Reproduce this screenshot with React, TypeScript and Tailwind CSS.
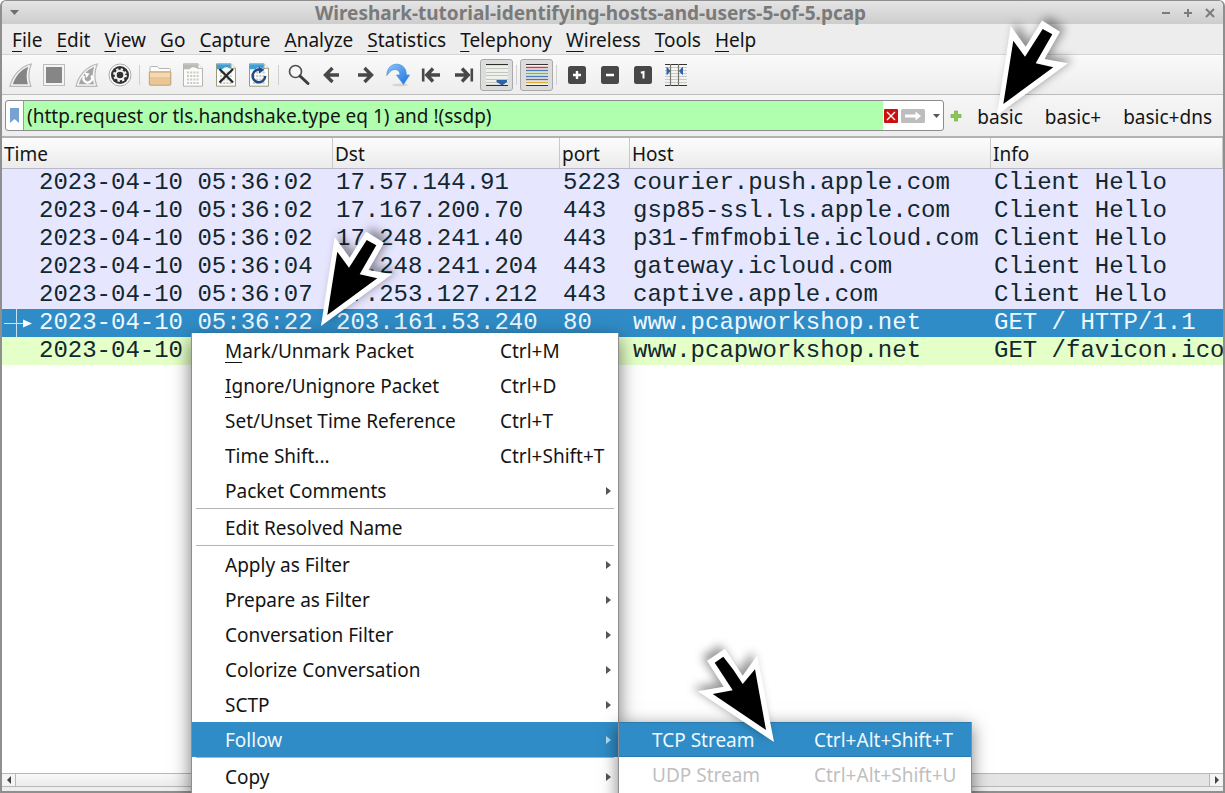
import type { ReactNode } from "react";

const MENUS = ["File", "Edit", "View", "Go", "Capture", "Analyze", "Statistics", "Telephony", "Wireless", "Tools", "Help"];

type Packet = { time: string; dst?: string; port?: string; host: string; info: string; kind: "tls" | "selected" | "http" };

const PACKETS: Packet[] = [
  { time: "2023-04-10 05:36:02", dst: "17.57.144.91", port: "5223", host: "courier.push.apple.com", info: "Client Hello", kind: "tls" },
  { time: "2023-04-10 05:36:02", dst: "17.167.200.70", port: "443", host: "gsp85-ssl.ls.apple.com", info: "Client Hello", kind: "tls" },
  { time: "2023-04-10 05:36:02", dst: "17.248.241.40", port: "443", host: "p31-fmfmobile.icloud.com", info: "Client Hello", kind: "tls" },
  { time: "2023-04-10 05:36:04", dst: "17.248.241.204", port: "443", host: "gateway.icloud.com", info: "Client Hello", kind: "tls" },
  { time: "2023-04-10 05:36:07", dst: "17.253.127.212", port: "443", host: "captive.apple.com", info: "Client Hello", kind: "tls" },
  { time: "2023-04-10 05:36:22", dst: "203.161.53.240", port: "80", host: "www.pcapworkshop.net", info: "GET / HTTP/1.1", kind: "selected" },
  { time: "2023-04-10", host: "www.pcapworkshop.net", info: "GET /favicon.ico", kind: "http" },
];

const ROW_STYLE = {
  tls: "bg-[#e7e6ff] text-[#12272e]",
  selected: "bg-[#308cc6] text-[#eef8ff]",
  http: "bg-[#e4ffc7] text-[#12272e]",
};

function Icon({ children }: { children: ReactNode }) {
  return (
    <svg viewBox="0 0 24 24" className="size-6" fill="none" aria-hidden="true">
      {children}
    </svg>
  );
}

function Tool({ label, pressed, children }: { label: string; pressed?: boolean; children: ReactNode }) {
  return (
    <button
      type="button"
      aria-label={label}
      aria-pressed={pressed}
      className={
        pressed
          ? "flex h-8 w-[33px] items-center rounded-[3px] border border-[#a9a9a9] bg-[#dcdcdc] pl-1"
          : "flex h-8 w-[33px] items-center pl-[5px]"
      }
    >
      {children}
    </button>
  );
}

function Divider() {
  return (
    <span className="flex h-5 w-[7px] justify-center">
      <span className="w-px bg-[#d0d0d0]" />
    </span>
  );
}

const FIN = "M1 23.3C3 14 10 4 22.3 1C19.3 8 19.3 16 21.8 23.3Z";
const FIN_INNER = "M3.8 21.3C6 14 11.500 7 19.200 3.700C17.200 9.500 17.200 15.500 18.900 21.300Z";

function Sheet({ color, corner }: { color: string; corner: string }) {
  return (
    <>
      <path d="M2.500 .8H17L21.500 5.300V23.200H2.500Z" fill="#fbfbf8" stroke={color} />
      <path d="M3 1.300H16.800V6C13 3.500 10 4 8.500 6.300H3Z" fill={corner} />
      <path d="M17 .8V5.300H21.500" fill="#fff" stroke={color} />
      <path d="M6 9.500h12.500M6 13h12.500M6 16.500h12.500M6 20h12.500" stroke="#c9c9c6" strokeWidth="2" strokeDasharray="2 1.200" />
    </>
  );
}

const LEFT_ARROW = "M12.500 5L5.500 12L12.500 19M6.500 12H19";
const RIGHT_ARROW = "M11.500 5L18.500 12L11.500 19M17.500 12H5";

function Toolbar() {
  return (
    <div role="toolbar" className="flex h-10 shrink-0 items-center border-b border-[#bcbcbc] bg-linear-to-b from-[#fafafa] to-[#ededed] pt-px pl-0.5">
      <Tool label="Start capture">
        <Icon>
          <path d={FIN} fill="#f4f4f4" stroke="#b9b9b9" strokeWidth="1.200" />
          <path d={FIN_INNER} fill="#858585" />
        </Icon>
      </Tool>
      <Tool label="Stop capture">
        <Icon>
          <rect x="1.500" y="1.500" width="21" height="21" fill="#f4f4f4" stroke="#bcbcbc" />
          <rect x="4" y="4" width="16" height="16" fill="#868686" />
        </Icon>
      </Tool>
      <Tool label="Restart capture">
        <Icon>
          <path d={FIN} fill="#f4f4f4" stroke="#b9b9b9" strokeWidth="1.200" />
          <path d={FIN_INNER} fill="#a5a5a5" />
          <path d="M9.200 12.800A4.300 4.300 0 1 0 16.200 12.500" stroke="#fff" strokeWidth="2.400" />
          <path d="M9.500 9.500L14.500 10.500L11.500 15Z" fill="#fff" />
        </Icon>
      </Tool>
      <Tool label="Capture options">
        <Icon>
          <circle cx="12" cy="12" r="11" fill="#fafafa" stroke="#ababab" />
          <circle cx="12" cy="12" r="9" fill="#303030" />
          <circle cx="12" cy="12" r="4.300" stroke="#f4f4f4" strokeWidth="2" />
          <circle cx="12" cy="12" r="5.900" stroke="#f4f4f4" strokeWidth="2" strokeDasharray="2.317 2.317" />
        </Icon>
      </Tool>
      <Divider />
      <Tool label="Open file">
        <Icon>
          <path d="M2 21V4.500Q2 3.500 3 3.500H9.500L11 5.500H21.500Q22.300 5.500 22.300 6.300V21Z" fill="#fff" stroke="#b5b5b5" />
          <path d="M1.300 9.500Q1.300 8.800 2 8.800H22Q22.800 8.800 22.800 9.500V21.500Q22.800 22.200 22 22.200H2Q1.300 22.200 1.300 21.500Z" fill="#e9c693" stroke="#c0a376" />
          <path d="M2 10H22V14H2Z" fill="#f3dab2" />
        </Icon>
      </Tool>
      <Tool label="Save file">
        <Icon>
          <Sheet color="#b4b4b4" corner="#b9b9b9" />
        </Icon>
      </Tool>
      <Tool label="Close file">
        <Icon>
          <Sheet color="#9a9a80" corner="#3ca0d8" />
          <path d="M5.500 6L19 19.500M19 6L5.500 19.500" stroke="#24292b" strokeWidth="2.300" />
        </Icon>
      </Tool>
      <Tool label="Reload file">
        <Icon>
          <Sheet color="#9a9a80" corner="#3ca0d8" />
          <path d="M14 7A6.300 6.300 0 1 0 18.200 13" stroke="#20498c" strokeWidth="2.500" />
          <path d="M11.500 3.500L17.500 6.800L12 10.500Z" fill="#20498c" />
        </Icon>
      </Tool>
      <Divider />
      <Tool label="Find packet">
        <Icon>
          <circle cx="8.500" cy="8.500" r="6" fill="#f8f8f8" stroke="#505050" strokeWidth="1.700" />
          <path d="M13 13L21 20.500" stroke="#3c3c3c" strokeWidth="3" strokeLinecap="round" />
        </Icon>
      </Tool>
      <Tool label="Previous packet">
        <Icon>
          <path d={LEFT_ARROW} stroke="#484848" strokeWidth="3.400" />
        </Icon>
      </Tool>
      <Tool label="Next packet">
        <Icon>
          <path d={RIGHT_ARROW} stroke="#484848" strokeWidth="3.400" />
        </Icon>
      </Tool>
      <Tool label="Go to packet">
        <Icon>
          <defs>
            <linearGradient id="goto" x1="0" y1="0" x2="1" y2="1">
              <stop offset="0" stopColor="#8fc6f8" />
              <stop offset="1" stopColor="#1670e0" />
            </linearGradient>
          </defs>
          <ellipse cx="14" cy="22" rx="8" ry="1.500" fill="#d4d4d4" />
          <path d="M.8 12.500C1 5 5.500 1 11 1.200C17 1.500 20.500 6 20.300 12H23.500L17.500 21.500L10.500 12H14C14 8.500 12 6.500 9 6.500C5.500 6.500 3.500 9 .8 12.500Z" fill="url(#goto)" stroke="#3d8be0" strokeWidth=".7" />
        </Icon>
      </Tool>
      <Tool label="First packet">
        <Icon>
          <path d="M4.200 5.500V18.500" stroke="#484848" strokeWidth="2.600" />
          <path d="M14 5.500L7.800 12L14 18.500M9 12H21" stroke="#484848" strokeWidth="3.400" />
        </Icon>
      </Tool>
      <Tool label="Last packet">
        <Icon>
          <path d="M19.800 5.500V18.500" stroke="#484848" strokeWidth="2.600" />
          <path d="M10 5.500L16.200 12L10 18.500M15 12H3" stroke="#484848" strokeWidth="3.400" />
        </Icon>
      </Tool>
      <Tool label="Auto scroll" pressed>
        <Icon>
          <path d="M1 1.500H23M1 22.500H23" stroke="#2f2f2f" strokeWidth="1.200" />
          <path d="M1 3H23V21H1Z" fill="#eef0ea" />
          <path d="M1 5.500H23M1 9.500H23M1 12.500H23M1 16.500H23M1 19.500H23" stroke="#c2c5bb" strokeWidth="1.200" />
          <path d="M11.500 17H22V19L20 20.500L17 22.500L14 20.500L11.500 19Z" fill="#2f63a8" />
        </Icon>
      </Tool>
      <Divider />
      <Tool label="Colorize packets" pressed>
        <Icon>
          <path d="M1 1H23V23H1Z" fill="#f3f3f0" />
          <path d="M1 1.500H23M1 22.500H23" stroke="#333" strokeWidth="1.200" />
          <path d="M1 4.500H23" stroke="#dc3b3b" strokeWidth="1.400" />
          <path d="M1 7.500H23" stroke="#4a78b8" strokeWidth="1.400" />
          <path d="M1 10.500H23" stroke="#72c040" strokeWidth="1.400" />
          <path d="M1 13.500H23" stroke="#4a78b8" strokeWidth="1.400" />
          <path d="M1 16.500H23" stroke="#80609a" strokeWidth="1.400" />
          <path d="M1 19.500H23" stroke="#d6b12e" strokeWidth="1.400" />
        </Icon>
      </Tool>
      <Divider />
      <Tool label="Zoom in">
        <Icon>
          <rect x="3" y="3" width="18" height="18" rx="2.500" fill="#484848" />
          <path d="M12 8V16M8 12H16" stroke="#fff" strokeWidth="2.400" />
        </Icon>
      </Tool>
      <Tool label="Zoom out">
        <Icon>
          <rect x="3" y="3" width="18" height="18" rx="2.500" fill="#484848" />
          <path d="M8 12H16" stroke="#fff" strokeWidth="2.400" />
        </Icon>
      </Tool>
      <Tool label="Normal size">
        <Icon>
          <rect x="3" y="3" width="18" height="18" rx="2.500" fill="#484848" />
          <path d="M9.800 9.800L12.500 9V15.500" stroke="#fff" strokeWidth="2" />
        </Icon>
      </Tool>
      <Tool label="Resize columns">
        <Icon>
          <path d="M1 4.500H23M1 7.500H23M1 10.500H23M1 13.500H23M1 16.500H23M1 19.500H23" stroke="#c8cbc4" strokeWidth="1.200" />
          <path d="M1 1.500H23M1 22.500H23" stroke="#333" strokeWidth="1.200" />
          <path d="M6.500 1V23M14.500 1V23" stroke="#77776c" strokeWidth="1.200" />
          <path d="M3 4.500L6 8L3 11.500ZM18.500 4.500L15.500 8L18.500 11.500Z" fill="#2f63a8" stroke="#2f63a8" />
        </Icon>
      </Tool>
    </div>
  );
}

function FilterBar() {
  return (
    <div className="flex h-[43px] shrink-0 items-center border-b-2 border-[#b2b2b2] bg-linear-to-b from-[#f6f6f6] to-[#ededed] pl-[3px]">
      <div className="flex h-[31px] min-w-0 flex-1 items-center rounded-[3px] border border-[#8c8c8c] bg-white">
        <button type="button" aria-label="Filter bookmarks" className="flex h-full w-[18px] items-center justify-center border-r border-[#9c9c9c]">
          <svg viewBox="0 0 9 15" className="h-[15px] w-[9px]" aria-hidden="true">
            <path d="M0 0H9V15L4.500 11L0 15Z" fill="#78a0d0" />
          </svg>
        </button>
        <input
          aria-label="Display filter"
          defaultValue="(http.request or tls.handshake.type eq 1) and !(ssdp)"
          className="h-full min-w-0 flex-1 bg-[#afffaf] pl-[3px] outline-none"
        />
        <button type="button" aria-label="Clear filter" className="ml-px">
          <svg viewBox="0 0 14 14" className="size-3.5" aria-hidden="true">
            <rect width="14" height="14" rx="1" fill="#cc1010" />
            <path d="M3 3L11 11M11 3L3 11" stroke="#fff" strokeWidth="1.300" />
          </svg>
        </button>
        <button type="button" aria-label="Apply filter" className="ml-[3px]">
          <svg viewBox="0 0 24 14" className="h-3.5 w-6" aria-hidden="true">
            <rect width="24" height="14" rx="1.500" fill="#bdbdbd" />
            <path d="M4 5.500H14.500V2.500L20 7L14.500 11.500V8.500H4Z" fill="#fff" />
          </svg>
        </button>
        <button type="button" aria-label="Recent filters" className="flex w-[18px] items-center justify-center pl-1">
          <svg viewBox="0 0 7 4" className="h-1 w-[7px]" aria-hidden="true">
            <path d="M0 0H7L3.500 4Z" fill="#555" />
          </svg>
        </button>
      </div>
      <button type="button" aria-label="Add filter button" className="flex w-[22px] items-center justify-center pl-px">
        <svg viewBox="0 0 12 12" className="size-3" aria-hidden="true">
          <path d="M4.500 1H7.500V4.500H11V7.500H7.500V11H4.500V7.500H1V4.500H4.500Z" fill="#8cc850" stroke="#72ae3c" strokeWidth=".7" />
        </svg>
      </button>
      <div className="flex pt-0.5">
        <button type="button" className="px-[11px]">basic</button>
        <button type="button" className="px-[11px]">basic+</button>
        <button type="button" className="px-[11px]">basic+dns</button>
      </div>
    </div>
  );
}

function PacketTable() {
  const head = "h-[31px] overflow-hidden border-r border-b border-r-[#c8c8c8] border-b-[#b8b8c8] px-0.5 pt-0.5 text-left font-normal";
  const cell = "h-7 overflow-hidden px-[3px] leading-7";
  return (
    <table className="w-full table-fixed border-separate border-spacing-0 whitespace-nowrap">
      <colgroup>
        <col className="w-[331px]" />
        <col className="w-[227px]" />
        <col className="w-[70px]" />
        <col className="w-[361px]" />
        <col />
      </colgroup>
      <thead className="bg-linear-to-b from-[#fcfcfc] to-[#ebebeb]">
        <tr>
          <th className={head}>Time</th>
          <th className={head}>Dst</th>
          <th className={head}>port</th>
          <th className={head}>Host</th>
          <th className={head}>Info</th>
        </tr>
      </thead>
      <tbody className="font-['Liberation_Mono',monospace] text-2xl">
        {PACKETS.map((p) => (
          <tr key={p.time + p.dst + p.host} className={ROW_STYLE[p.kind]}>
            <td className="h-7 overflow-hidden p-0 leading-7">
              <div className="flex">
                <span className="w-[37px] shrink-0">
                  {p.kind === "selected" && (
                    <svg viewBox="0 0 37 28" className="h-7 w-[37px]" aria-hidden="true">
                      <path d="M14.500 0V28M2 14.500H22" stroke="#c8e2f4" />
                      <path d="M21 10.500L30 14.500L21 18.500Z" fill="#fff" />
                    </svg>
                  )}
                </span>
                {p.time}
              </div>
            </td>
            <td className={cell}>{p.dst}</td>
            <td className={cell}>{p.port}</td>
            <td className={cell}>{p.host}</td>
            <td className={cell}>{p.info}</td>
          </tr>
        ))}
      </tbody>
    </table>
  );
}

type Entry = { label: string; keys?: string; sub?: boolean; underline?: boolean; active?: boolean };

const GROUPS: Entry[][] = [
  [
    { label: "Mark/Unmark Packet", keys: "Ctrl+M", underline: true },
    { label: "Ignore/Unignore Packet", keys: "Ctrl+D", underline: true },
    { label: "Set/Unset Time Reference", keys: "Ctrl+T" },
    { label: "Time Shift...", keys: "Ctrl+Shift+T" },
    { label: "Packet Comments", sub: true },
  ],
  [{ label: "Edit Resolved Name" }],
  [
    { label: "Apply as Filter", sub: true },
    { label: "Prepare as Filter", sub: true },
    { label: "Conversation Filter", sub: true },
    { label: "Colorize Conversation", sub: true },
    { label: "SCTP", sub: true },
    { label: "Follow", sub: true, active: true },
  ],
  [{ label: "Copy", sub: true }],
];

function Mnemonic({ text }: { text: string }) {
  return (
    <>
      <span className="underline decoration-1 underline-offset-4">{text[0]}</span>
      {text.slice(1)}
    </>
  );
}

function ContextMenu() {
  return (
    <div role="menu" className="absolute top-[333px] left-[191px] w-[428px] border-x border-[#8e8e8e] bg-white shadow-[0_6px_18px_rgba(0,0,0,0.55)]">
      {GROUPS.map((group, i) => (
        <div key={group[0].label} className={i === 0 ? "" : "pt-0.5"}>
          {i > 0 && <hr className="mx-1 -mt-0.5 mb-px border-[#b4b4b4]" />}
          {group.map((e) => (
            <button
              key={e.label}
              type="button"
              role="menuitem"
              className={
                e.active
                  ? "flex h-[35px] w-full items-center bg-[#308cc6] pr-[7px] pl-[33px] text-left text-[#eef8ff]"
                  : "flex h-[35px] w-full items-center pr-[7px] pl-[33px] text-left"
              }
            >
              <span className="w-[275px]">{e.underline ? <Mnemonic text={e.label} /> : e.label}</span>
              <span className="flex-1">{e.keys}</span>
              {e.sub && (
                <svg viewBox="0 0 5 8" className="h-2 w-[5px]" aria-hidden="true">
                  <path d="M0 0L5 4L0 8Z" fill={e.active ? "#b8dcf2" : "#555"} />
                </svg>
              )}
            </button>
          ))}
        </div>
      ))}
    </div>
  );
}

function FollowMenu() {
  return (
    <div role="menu" className="absolute top-[722px] left-[618px] w-[354px] border border-t-0 border-[#8e8e8e] bg-white pb-10 shadow-[0_4px_16px_rgba(0,0,0,0.5)]">
      <button type="button" role="menuitem" className="flex h-[35px] w-full items-center border-y border-[#2a7cb0] bg-[#308cc6] pl-[33px] text-left text-[#eef8ff]">
        <span className="w-[162px]">TCP Stream</span>
        <span>Ctrl+Alt+Shift+T</span>
      </button>
      <button type="button" role="menuitem" disabled className="flex h-[35px] w-full items-center pl-[33px] text-left text-[#bfbfbf]">
        <span className="w-[162px]">UDP Stream</span>
        <span>Ctrl+Alt+Shift+U</span>
      </button>
    </div>
  );
}

function DownLeftPointer() {
  return (
    <svg viewBox="0 0 90 110" className="h-[110px] w-[90px] drop-shadow-[5px_-4px_5px_rgba(0,0,0,0.4)]" aria-hidden="true">
      <path d="M7 105L20.700 16L35.700 36.700L52 10.500L70 21.700L54.500 49L78 53.300Z" fill="#fff" />
      <path d="M13.300 94L23.300 30.700L35 46.700L52.700 19L62.300 24.300L45.700 53.300L63.300 57.300Z" fill="#000" />
    </svg>
  );
}

function DownRightPointer() {
  return (
    <svg viewBox="0 0 90 110" className="h-[110px] w-[90px] drop-shadow-[-5px_-4px_5px_rgba(0,0,0,0.4)]" aria-hidden="true">
      <path d="M84 102L67.300 15.300L52.700 35.700L35 8.700L17 20.700L33.700 46.700L7.700 51.300Z" fill="#fff" />
      <path d="M76 90L65 29.300L52.700 44L43.500 30L33.300 16.700L24.700 22.700L42.700 50.300L22.700 54Z" fill="#000" />
    </svg>
  );
}

export default function App() {
  return (
    <div className="relative h-screen overflow-hidden bg-white font-['Noto_Sans',sans-serif] text-[19px] leading-6 text-[#141414]">
      <div className="flex h-full flex-col overflow-hidden rounded-t-md border-x-2 border-t border-b-2 border-[#8f8f8f] bg-[#ededed]">
        <header className="flex h-[23px] shrink-0 items-center bg-linear-to-b from-[#e4e4e4] to-[#cdcdcd] px-2">
          <button type="button" aria-label="Window menu" className="w-14">
            <svg viewBox="0 0 9 5" className="h-[5px] w-[9px]" aria-hidden="true">
              <path d="M0 0H9L4.500 5Z" fill="#6e6e6e" />
            </svg>
          </button>
          <h1 className="flex-1 truncate text-center font-bold text-[#7a7a7a]">Wireshark-tutorial-identifying-hosts-and-users-5-of-5.pcap</h1>
          <div className="flex w-[100px] justify-end gap-3">
            <button type="button" aria-label="Minimize">
              <svg viewBox="0 0 10 10" className="size-2.5" aria-hidden="true"><path d="M1 5H9" stroke="#7c7c7c" strokeWidth="2" /></svg>
            </button>
            <button type="button" aria-label="Maximize">
              <svg viewBox="0 0 10 10" className="size-2.5" aria-hidden="true"><path d="M1 5H9M5 1V9" stroke="#7c7c7c" strokeWidth="2" /></svg>
            </button>
            <button type="button" aria-label="Close">
              <svg viewBox="0 0 10 10" className="size-2.5" aria-hidden="true"><path d="M1 1L9 9M9 1L1 9" stroke="#7c7c7c" strokeWidth="2" /></svg>
            </button>
          </div>
        </header>
        <nav className="flex h-[31px] shrink-0 items-center gap-3.5 border-b border-[#d4d4d4] pt-0.5 pl-2.5">
          {MENUS.map((m) => (
            <button key={m} type="button">
              <Mnemonic text={m} />
            </button>
          ))}
        </nav>
        <Toolbar />
        <FilterBar />
        <main className="min-h-0 flex-1 overflow-hidden bg-white">
          <PacketTable />
        </main>
        <div className="mb-1 flex h-3.5 shrink-0 border-y border-[#b8b8b8] bg-[#e4e4e4]">
          <button type="button" aria-label="Scroll left" className="flex w-3.5 items-center justify-center border-r border-[#b8b8b8] bg-[#f4f4f4]">
            <svg viewBox="0 0 4 8" className="h-2 w-1" aria-hidden="true"><path d="M4 0V8L0 4Z" fill="#444" /></svg>
          </button>
          <div className="flex-1">
            <div className="h-full w-2/3 border-r border-[#b8b8b8] bg-linear-to-b from-[#f8f8f8] to-[#ececec]" />
          </div>
          <button type="button" aria-label="Scroll right" className="flex w-3.5 items-center justify-center border-l border-[#b8b8b8] bg-[#f4f4f4]">
            <svg viewBox="0 0 4 8" className="h-2 w-1" aria-hidden="true"><path d="M0 0V8L4 4Z" fill="#444" /></svg>
          </button>
        </div>
      </div>

      <ContextMenu />
      <FollowMenu />
      <div className="absolute top-[10px] left-[990px]">
        <DownLeftPointer />
      </div>
      <div className="absolute top-[221px] left-[314px]">
        <DownLeftPointer />
      </div>
      <div className="absolute top-[640px] left-[690px]">
        <DownRightPointer />
      </div>
    </div>
  );
}
